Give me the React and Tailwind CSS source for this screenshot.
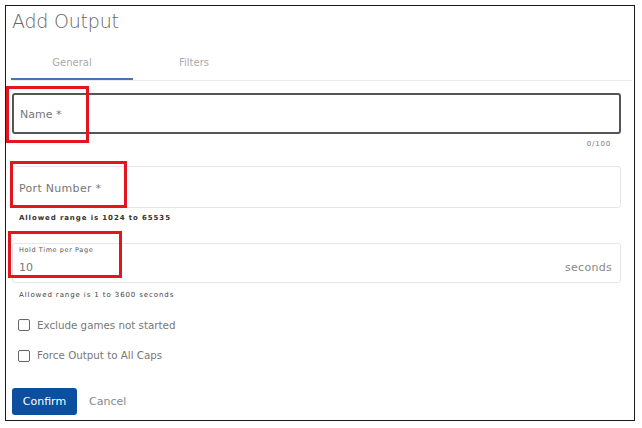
import React, { useState } from "react"

const font = { fontFamily: '"DejaVu Sans", "Open Sans", sans-serif' }

const Highlight = ({ className }) => (
    <div className={`pointer-events-none absolute border-[3px] border-[#e3151d] ${className}`} />
)

const Checkbox = ({ label, checked, onChange }) => (
    <label className="flex items-center gap-[7px] cursor-pointer">
        <span
            onClick={onChange}
            className="w-[12px] h-[12px] border-[1.5px] border-[#666] rounded-[2px] bg-white"
        />
        <span className="text-[10.3px] text-[#777]">{label}</span>
    </label>
)

const App = () => {
    const [tab, setTab] = useState("general")
    const [name, setName] = useState("")
    const [exclude, setExclude] = useState(false)
    const [force, setForce] = useState(false)

    return (
        <div className="w-[642px] h-[428px] bg-white" style={font}>
            <div className="relative ml-[5px] mt-[5px] w-[630px] h-[416px] border-[1.5px] border-[#1a1a1a] bg-white">
                <h1 className="pl-[6px] pt-[2px] text-[19px] leading-[26px] font-light text-[#666] tracking-[-0.2px]">
                    Add Output
                </h1>

                <div className="mt-[13px] ml-[5px] mr-[2px] flex border-b border-[#ececec]">
                    <button
                        onClick={() => setTab("general")}
                        className={`w-[122px] h-[33px] text-[10px] text-[#aaa] border-b-2 ${tab === "general" ? "border-[#4a74ad]" : "border-transparent"}`}
                    >
                        General
                    </button>
                    <button
                        onClick={() => setTab("filters")}
                        className={`w-[122px] h-[33px] text-[10px] text-[#aaa] border-b-2 ${tab === "filters" ? "border-[#4a74ad]" : "border-transparent"}`}
                    >
                        Filters
                    </button>
                </div>

                <div className="pl-[6px] pr-[13px] pt-[12px]">
                    {/* Name */}
                    <div className="relative">
                        <div className="h-[41px] flex items-center px-[6px] pt-[4px] border-2 border-[#555] rounded-[3px]">
                            <input
                                value={name}
                                onChange={(e) => setName(e.target.value)}
                                placeholder="Name *"
                                className="w-full text-[11px] text-[#555] placeholder-[#777] outline-none"
                            />
                        </div>
                        <Highlight className="-left-[6px] -top-[7px] w-[83px] h-[57px]" />
                        <div className="flex justify-end pr-[10px] pt-[5px] text-[7px] tracking-[0.8px] text-[#777]">
                            {name.length}/100
                        </div>
                    </div>

                    {/* Port number */}
                    <div className="relative mt-[16px]">
                        <div className="h-[42px] flex items-center px-[6px] pt-[5px] border border-[#e6e6e6] rounded-[3px]">
                            <span className="text-[11px] tracking-[0.3px] text-[#777]">Port Number *</span>
                        </div>
                        <Highlight className="-left-[2px] -top-[5px] w-[117px] h-[47px]" />
                        <div className="pl-[7px] pt-[5px] text-[7px] font-bold tracking-[0.9px] text-[#333]">
                            Allowed range is 1024 to 65535
                        </div>
                    </div>

                    {/* Hold time */}
                    <div className="relative mt-[20px]">
                        <div className="h-[40px] flex flex-col px-[6px] pt-[1px] border border-[#e6e6e6] rounded-[3px]">
                            <span className="text-[6.5px] tracking-[0.6px] text-[#555] leading-[10px]">Hold Time per Page</span>
                            <div className="flex items-center justify-between mt-[5px]">
                                <span className="text-[11px] text-[#777]">10</span>
                                <span className="text-[11px] text-[#888] tracking-[0.3px] pr-[2px]">seconds</span>
                            </div>
                        </div>
                        <Highlight className="-left-[4px] -top-[12px] w-[114px] h-[47px]" />
                        <div className="pl-[7px] pt-[7px] text-[7px] tracking-[0.9px] text-[#444]">
                            Allowed range is 1 to 3600 seconds
                        </div>
                    </div>

                    <div className="mt-[17px] pl-[6px] flex flex-col gap-[15px]">
                        <Checkbox label="Exclude games not started" checked={exclude} onChange={() => setExclude(!exclude)} />
                        <Checkbox label="Force Output to All Caps" checked={force} onChange={() => setForce(!force)} />
                    </div>

                    <div className="mt-[25px] flex items-center gap-[12px]">
                        <button className="w-[65px] h-[27px] rounded-[3px] bg-[#0b4f9e] text-white text-[11px]">
                            Confirm
                        </button>
                        <button className="text-[11px] text-[#888]">Cancel</button>
                    </div>
                </div>
            </div>
        </div>
    )
}

export default App
